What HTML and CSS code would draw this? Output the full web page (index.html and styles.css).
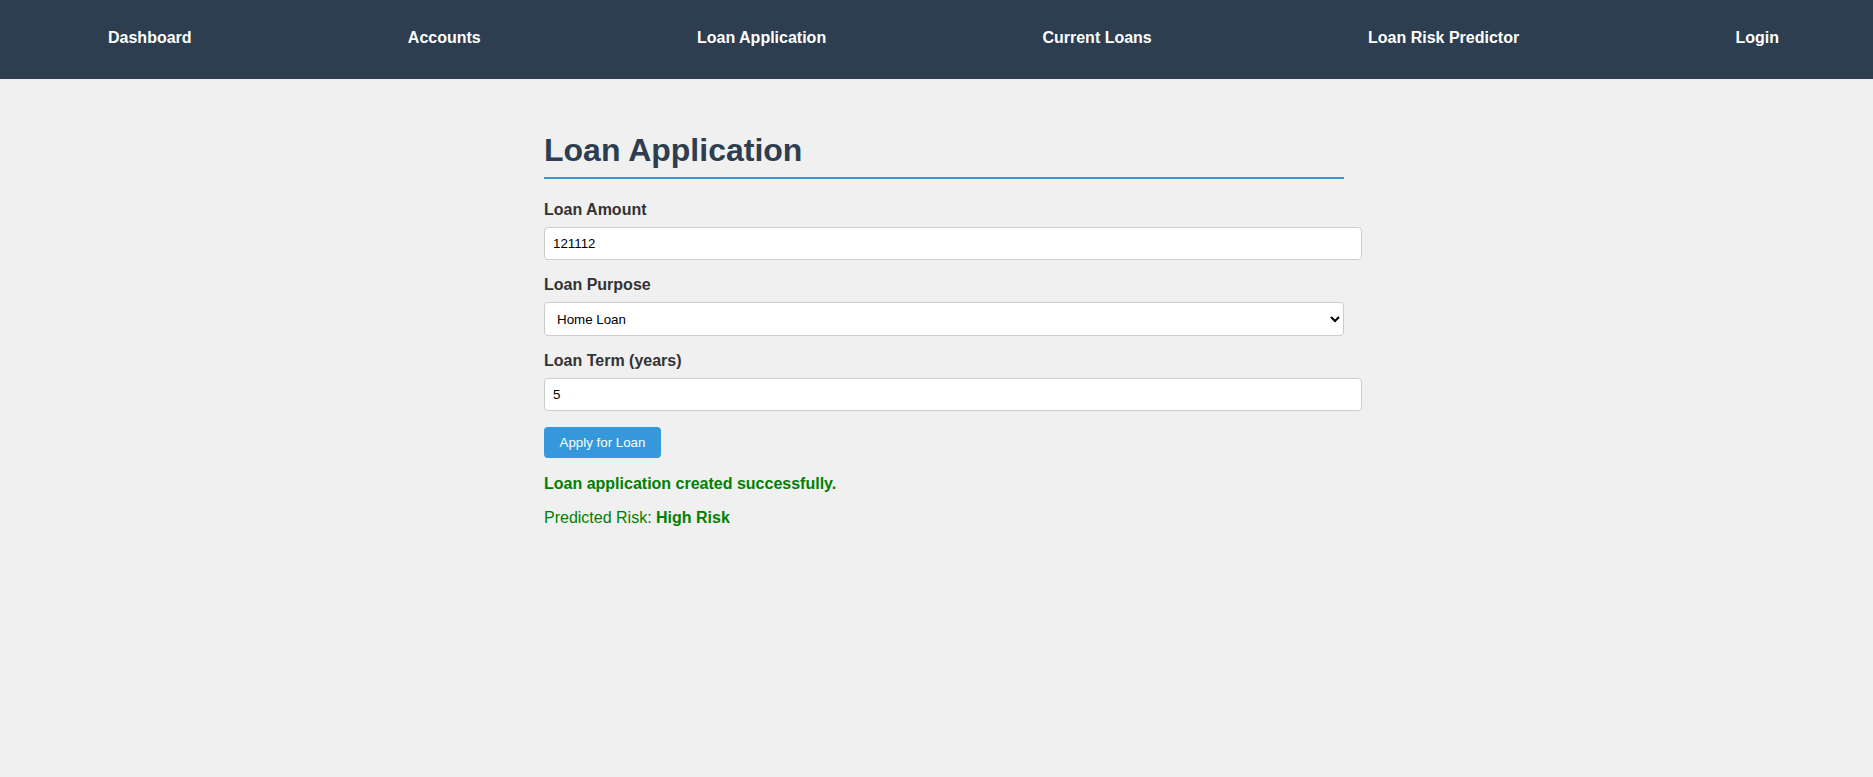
FILE: index.html
```html
<!DOCTYPE html>
<html lang="en">
<head>
<meta charset="utf-8">
<title>Loan Application</title>
<link rel="stylesheet" href="styles.css">
</head>
<body>
<nav class="navbar">
  <ul class="nav-list">
    <li><a class="nav-link" href="#">Dashboard</a></li>
    <li><a class="nav-link" href="#">Accounts</a></li>
    <li><a class="nav-link" href="#">Loan Application</a></li>
    <li><a class="nav-link" href="#">Current Loans</a></li>
    <li><a class="nav-link" href="#">Loan Risk Predictor</a></li>
    <li><a class="nav-link" href="#">Login</a></li>
  </ul>
</nav>
<main class="main">
  <section class="container">
    <h2 class="title">Loan Application</h2>
    <form class="loan-form">
      <div class="form-group">
        <label class="form-label" for="amount">Loan Amount</label>
        <input class="form-input" id="amount" type="text" value="121112">
      </div>
      <div class="form-group">
        <label class="form-label" for="purpose">Loan Purpose</label>
        <select class="form-select" id="purpose">
          <option>Home Loan</option>
          <option>Car Loan</option>
          <option>Personal Loan</option>
        </select>
      </div>
      <div class="form-group">
        <label class="form-label" for="term">Loan Term (years)</label>
        <input class="form-input" id="term" type="text" value="5">
      </div>
      <button class="btn" type="button">Apply for Loan</button>
    </form>
    <p class="success">Loan application created successfully.</p>
    <p class="risk">Predicted Risk: <strong>High Risk</strong></p>
  </section>
</main>
</body>
</html>
```
FILE: styles.css
```css
html, body {
  margin: 0;
  padding: 0;
}
body {
  background: #f0f0f0;
  font-family: "Liberation Sans", Arial, sans-serif;
  color: #333;
  min-height: 777px;
}
.navbar {
  background: #2c3e50;
  height: 79px;
  box-sizing: border-box;
  padding-top: 29px;
}
.nav-list {
  list-style: none;
  margin: 0;
  padding: 0 94px 0 108px;
  display: flex;
  justify-content: space-between;
}
.nav-link {
  color: #fff;
  text-decoration: none;
  font-weight: bold;
  font-size: 16px;
}
.main {
  display: flex;
  justify-content: center;
  padding: 53px 0 0 15px;
}
.container {
  width: 800px;
}
.title {
  margin: 0 0 22px;
  padding-bottom: 8px;
  border-bottom: 2px solid #3498db;
  font-size: 32px;
  color: #2c3e50;
}
.form-group {
  margin-bottom: 16px;
}
.form-label {
  display: block;
  margin-bottom: 8px;
  font-weight: bold;
  font-size: 16px;
  color: #333;
}
.form-input,
.form-select {
  font-family: "Liberation Sans", Arial, sans-serif;
  font-size: 13.333px;
  border: 1px solid #ccc;
  border-radius: 4px;
  background: #fff;
  color: #000;
}
.form-input {
  width: 100%;
  padding: 8px;
}
.form-select {
  width: 800px;
  padding: 8px;
  height: 34px;
}
.btn {
  font-family: "Liberation Sans", Arial, sans-serif;
  font-size: 13.333px;
  background: #3498db;
  color: #fff;
  border: none;
  border-radius: 4px;
  padding: 8px 15.5px;
}
.success {
  margin: 17px 0 0;
  color: green;
  font-weight: bold;
}
.risk {
  margin: 16px 0 0;
  color: green;
}
```
